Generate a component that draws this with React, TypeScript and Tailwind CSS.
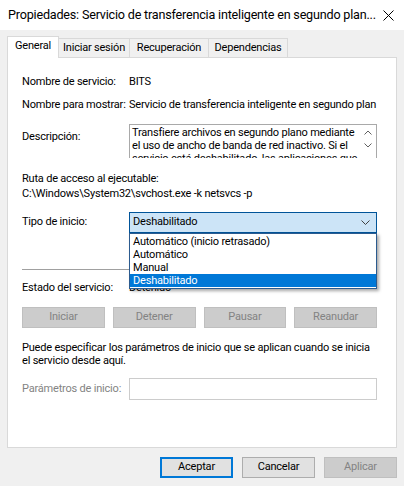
const tabs = ["General", "Iniciar sesión", "Recuperación", "Dependencias"];
const tabWidths = ["w-[52px]", "w-[71px]", "w-[79px]", "w-[79px]"];
const startOptions = [
  "Automático (inicio retrasado)",
  "Automático",
  "Manual",
  "Deshabilitado",
];
const serviceButtons = ["Iniciar", "Detener", "Pausar", "Reanudar"];

const Row = ({ label, children }: { label: string; children: React.ReactNode }) => (
  <div className="flex h-[16px] items-center leading-[16px]">
    <div className="w-[107px] shrink-0">{label}</div>
    <div className="whitespace-nowrap">{children}</div>
  </div>
);

export default function App() {
  return (
    <div className="w-[404px] h-[486px] overflow-hidden bg-[#f0f0f0] text-[11px] tracking-[-0.2px] text-black font-[Roboto,sans-serif]">
      {/* title bar */}
      <div className="h-[30px] bg-white flex items-center justify-between pl-[8px] pr-[10px]">
        <span className="text-[12.6px] tracking-[-0.2px] whitespace-nowrap">
          Propiedades: Servicio de transferencia inteligente en segundo plan...
        </span>
        <svg width="11" height="11" viewBox="0 0 11 11">
          <path d="M0.5 0.5L10.5 10.5M10.5 0.5L0.5 10.5" stroke="#000" strokeWidth="1" />
        </svg>
      </div>

      {/* tabs */}
      <div className="flex items-end h-[27px] pl-[7px]">
        {tabs.map((t, i) =>
          i === 0 ? (
            <div
              key={t}
              className={`${tabWidths[i]} h-[22px] -mb-px relative z-10 bg-white border border-b-0 border-[#d9d9d9] flex items-center justify-center pb-[3px]`}
            >
              {t}
            </div>
          ) : (
            <div
              key={t}
              className={`${tabWidths[i]} h-[19px] bg-[#f0f0f0] border-t border-r border-[#d9d9d9] flex items-center justify-center`}
            >
              {t}
            </div>
          )
        )}
      </div>

      {/* panel */}
      <div className="mx-[7px] h-[391px] bg-white border border-[#d9d9d9] pl-[14px] pr-[19px] pt-[16px]">
        <Row label="Nombre de servicio:">BITS</Row>
        <div className="mt-[7px]">
          <Row label="Nombre para mostrar:">
            Servicio de transferencia inteligente en segundo plan
          </Row>
        </div>

        <div className="flex mt-[11px]">
          <div className="w-[107px] shrink-0 mt-[5px] leading-[16px]">Descripción:</div>
          <div className="flex-1 h-[34px] border border-b-0 border-[#a9a9a9] flex overflow-hidden">
            <div className="flex-1 pl-[2px] pt-[1px] leading-[13px]">
              Transfiere archivos en segundo plano mediante el uso de ancho de banda de red inactivo. Si el servicio está deshabilitado, las aplicaciones que
            </div>
            <div className="w-[17px] flex flex-col items-center pt-[5px] gap-[8px]">
              <svg width="8" height="5" viewBox="0 0 8 5">
                <path d="M0.5 4.5L4 1L7.5 4.5" fill="none" stroke="#606060" />
              </svg>
              <svg width="8" height="5" viewBox="0 0 8 5">
                <path d="M0.5 0.5L4 4L7.5 0.5" fill="none" stroke="#606060" />
              </svg>
            </div>
          </div>
        </div>

        <div className="mt-[13px] leading-[15px]">Ruta de acceso al ejecutable:</div>
        <div className="leading-[15px] whitespace-nowrap">
          C:\Windows\System32\svchost.exe -k netsvcs -p
        </div>

        <div className="flex items-center mt-[11px]">
          <div className="w-[107px] shrink-0">Tipo de inicio:</div>
          <div className="relative flex-1">
            <div className="h-[21px] bg-[#cce4f7] border border-[#005499] flex items-center justify-between pl-[3px] pr-[6px]">
              <span>Deshabilitado</span>
              <svg width="9" height="5" viewBox="0 0 9 5">
                <path d="M0.5 0.5L4.5 4.5L8.5 0.5" fill="none" stroke="#404040" />
              </svg>
            </div>
            <div className="absolute left-0 right-0 top-full z-20 bg-white border border-[#2b5b8f] shadow-[2px_2px_3px_rgba(0,0,0,0.35)] py-px">
              {startOptions.map((o) => (
                <div
                  key={o}
                  className={`h-[13px] leading-[13px] pl-[3px] ${
                    o === "Deshabilitado" ? "bg-[#0078d7] text-white" : ""
                  }`}
                >
                  {o}
                </div>
              ))}
            </div>
          </div>
        </div>

        <div className="mt-[36px] h-px bg-[#a0a0a0]" />

        <div className="mt-[10px]">
          <Row label="Estado del servicio:">Detenido</Row>
        </div>

        <div className="mt-[11px] grid grid-cols-4 gap-[8px]">
          {serviceButtons.map((b) => (
            <div
              key={b}
              className="h-[21px] bg-[#cccccc] border border-[#bfbfbf] text-[#838383] flex items-center justify-center"
            >
              {b}
            </div>
          ))}
        </div>

        <div className="mt-[13px] leading-[13px]">
          Puede especificar los parámetros de inicio que se aplican cuando se inicia el servicio desde aquí.
        </div>

        <div className="flex items-center mt-[11px]">
          <div className="w-[107px] shrink-0 text-[#838383]">Parámetros de inicio:</div>
          <div className="flex-1 h-[22px] border border-[#cccccc] bg-white" />
        </div>
      </div>

      {/* dialog buttons */}
      <div className="flex justify-end gap-[9px] pr-[7px] mt-[9px]">
        <div className="w-[73px] h-[21px] bg-[#e1e1e1] border-2 border-[#0078d7] flex items-center justify-center">
          Aceptar
        </div>
        <div className="w-[73px] h-[21px] bg-[#e1e1e1] border border-[#adadad] flex items-center justify-center">
          Cancelar
        </div>
        <div className="w-[73px] h-[21px] bg-[#cccccc] border border-[#bfbfbf] text-[#838383] flex items-center justify-center">
          Aplicar
        </div>
      </div>
    </div>
  );
}
